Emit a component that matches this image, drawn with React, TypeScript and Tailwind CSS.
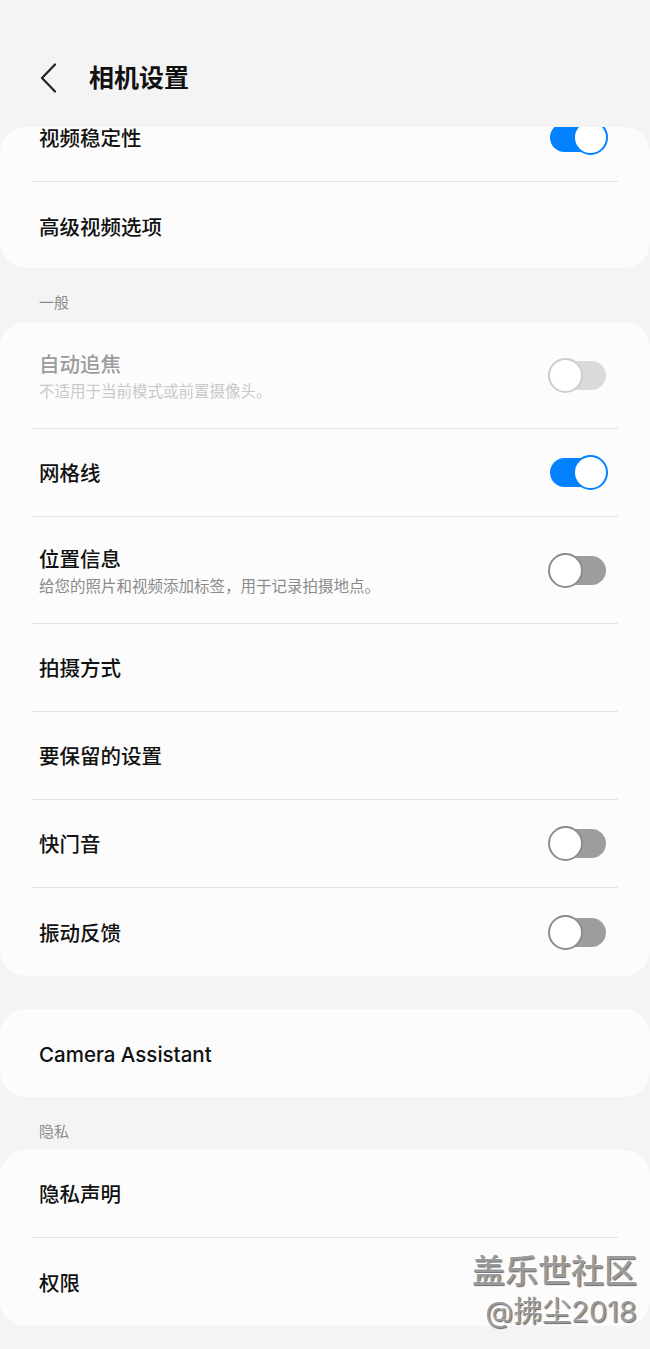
import React from "react";

const font = "font-['Inter','Noto_Sans_CJK_SC',sans-serif]";

type ToggleState = "on" | "off" | "disabled";

const Toggle = ({ state }: { state: ToggleState }) => {
  if (state === "on") {
    return (
      <div className="relative w-[60px] h-[35px] flex items-center">
        <div className="ml-[2px] w-[56px] h-[29px] rounded-full bg-[#0381fe]" />
        <div className="absolute right-0 top-0 w-[35px] h-[35px] rounded-full bg-white border-[2px] border-[#0381fe]" />
      </div>
    );
  }
  const track = state === "off" ? "bg-[#9d9d9d]" : "bg-[#dadada]";
  const ring = state === "off" ? "border-[#8c8c8c]" : "border-[#cdcdcd]";
  return (
    <div className="relative w-[60px] h-[35px] flex items-center">
      <div className={`ml-[2px] w-[56px] h-[29px] rounded-full ${track}`} />
      <div className={`absolute left-0 top-0 w-[35px] h-[35px] rounded-full bg-white border-[2px] ${ring}`} />
    </div>
  );
};

interface RowProps {
  title: string;
  sub?: string;
  toggle?: ToggleState;
  disabled?: boolean;
  last?: boolean;
}

const Row = ({ title, sub, toggle, disabled = false, last = false }: RowProps) => {
  const height = sub ? "h-[107px]" : "h-[88px]";
  return (
    <div className="px-[32px]">
      <div
        className={`${height} flex items-center justify-between pl-[7px] pr-[10px] ${
          last ? "" : "border-b border-[#e3e3e3]"
        }`}
      >
        <div className="flex flex-col pt-[3px]">
          <span
            className={`text-[20.5px] leading-[26px] font-medium ${
              disabled ? "text-[#9b9b9b]" : "text-[#111111]"
            }`}
          >
            {title}
          </span>
          {sub && (
            <span
              className={`mt-[4px] text-[15.5px] leading-[20px] ${
                disabled ? "text-[#c9c9c9]" : "text-[#8b8b8b]"
              }`}
            >
              {sub}
            </span>
          )}
        </div>
        {toggle && <Toggle state={toggle} />}
      </div>
    </div>
  );
};

const Label = ({ text, pb }: { text: string; pb: string }) => (
  <div className={`pl-[39px] pt-[25px] ${pb} text-[15px] leading-[20px] text-[#8c8c8c]`}>
    {text}
  </div>
);

const Card = ({ children, className = "" }: { children: React.ReactNode; className?: string }) => (
  <div className={`bg-[#fcfcfc] rounded-[26px] overflow-hidden ${className}`}>{children}</div>
);

export default function App() {
  return (
    <div className={`relative w-[650px] h-[1349px] overflow-hidden bg-[#f4f4f4] ${font}`}>
      <div className="h-[127px] pt-[62px]">
        <div className="h-[32px] flex items-center">
          <svg width="20" height="30" viewBox="0 0 20 30" className="ml-[39px]">
            <path d="M16 1.5 L3 15 L16 28.5" fill="none" stroke="#222" strokeWidth="2.2" strokeLinecap="round" strokeLinejoin="round" />
          </svg>
          <span className="ml-[30px] text-[25px] leading-[32px] font-bold text-[#111111]">相机设置</span>
        </div>
      </div>

      <Card className="h-[141px]">
        <div className="mt-[-33px]">
          <Row title="视频稳定性" toggle="on" />
          <Row title="高级视频选项" last />
        </div>
      </Card>

      <Label text="一般" pb="pb-[9px]" />

      <Card>
        <Row title="自动追焦" sub="不适用于当前模式或前置摄像头。" toggle="disabled" disabled />
        <Row title="网格线" toggle="on" />
        <Row title="位置信息" sub="给您的照片和视频添加标签，用于记录拍摄地点。" toggle="off" />
        <Row title="拍摄方式" />
        <Row title="要保留的设置" />
        <Row title="快门音" toggle="off" />
        <Row title="振动反馈" toggle="off" last />
      </Card>

      <div className="h-[33px]" />

      <Card>
        <Row title="Camera Assistant" last />
      </Card>

      <Label text="隐私" pb="pb-[8px]" />

      <Card>
        <Row title="隐私声明" />
        <Row title="权限" last />
      </Card>

      <div className="absolute right-[13px] bottom-[20px] flex flex-col items-end text-[#9a9a9a] [text-shadow:-1px_-1px_0_#ffffff,1px_1px_1px_#6a6a6a]">
        <span className="text-[33px] leading-[40px] font-medium">盖乐世社区</span>
        <span className="mt-[4px] text-[29px] leading-[34px]">@拂尘2018</span>
      </div>
    </div>
  );
}
